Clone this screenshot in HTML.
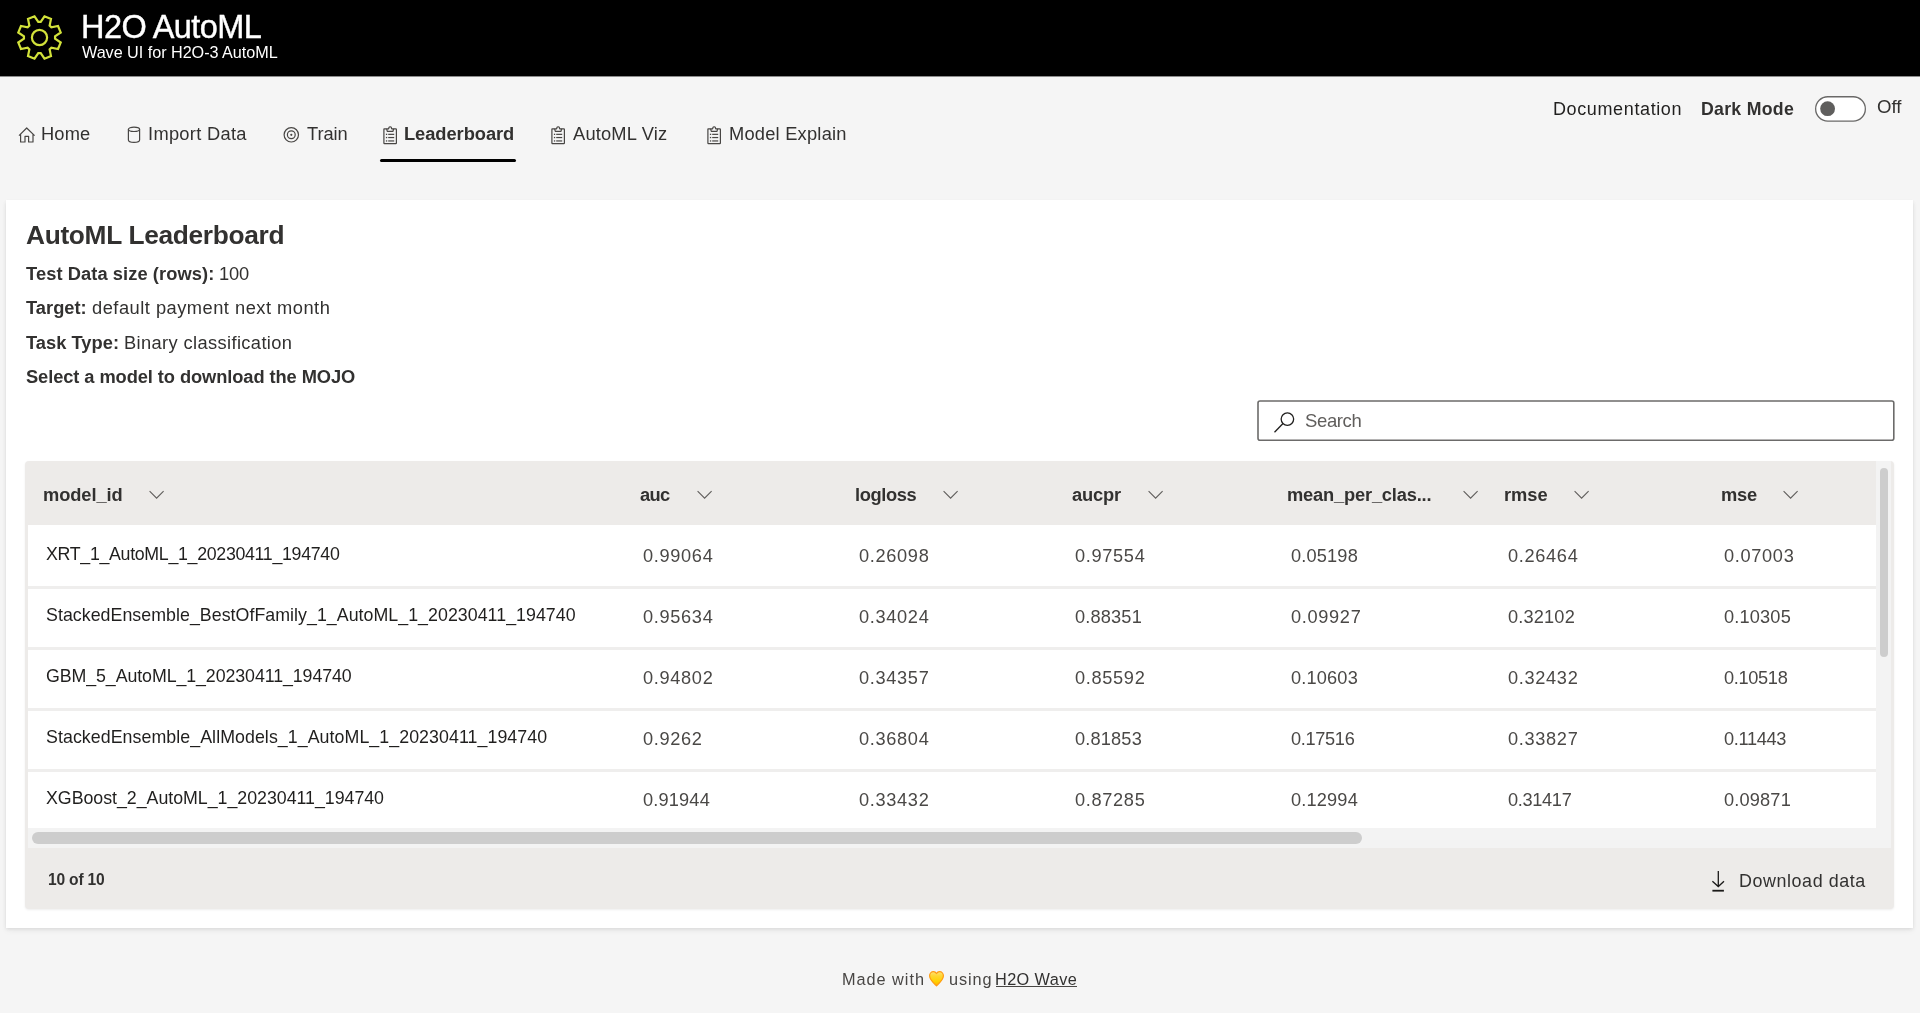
<!DOCTYPE html>
<html><head><meta charset="utf-8"><title>H2O AutoML</title>
<style>
html,body{margin:0;padding:0;}
body{width:1920px;height:1013px;overflow:hidden;position:relative;background:#f5f5f5;font-family:"Liberation Sans",sans-serif;}
.t{position:absolute;white-space:nowrap;line-height:1;will-change:transform;}
.a{position:absolute;}
#hdr{left:0;top:0;width:1920px;height:76px;background:#000;}
#card{left:6px;top:200px;width:1907px;height:728px;background:#fff;box-shadow:0 1.6px 3.6px rgba(0,0,0,.09),0 .3px .9px rgba(0,0,0,.07),0 3px 7px rgba(0,0,0,.035);}
#ul{left:380px;top:159px;width:136px;height:3px;background:#000;border-radius:1.5px;}
#tbl{left:25px;top:461px;width:1869px;height:448px;background:#edebe9;border-radius:4px;box-shadow:0 1px 2.5px rgba(0,0,0,.07);}
#rows{left:28px;top:525px;width:1848px;height:303px;background:#fff;}
.dv{position:absolute;left:28px;width:1848px;height:3px;background:#efeeed;}
#vtrack{left:1876px;top:461px;width:15px;height:387px;background:#f3f3f3;}
#vthumb{left:1880px;top:468px;width:8px;height:189px;background:#cdcdcd;border-radius:4px;}
#htrack{left:28px;top:828px;width:1848px;height:20px;background:#f3f3f3;}
#hthumb{left:32px;top:832px;width:1330px;height:12px;background:#cdcdcd;border-radius:6px;}
#h2ul{left:996px;top:986px;width:81px;height:1px;background:#484644;}
svg{position:absolute;overflow:visible;}
</style></head><body>
<div class="a" id="hdr"></div>
<div class="a" style="left:0;top:76px;width:1920px;height:1px;background:#8c8c8c"></div>
<svg style="left:16px;top:14px" width="48" height="48" viewBox="0 0 48 48">
  <g fill="none" stroke="#d2e23a" stroke-width="2.2" stroke-linejoin="miter">
    <path d="M24.72 7.95 L28.48 2.28 L34.99 4.97 L33.63 11.64 L35.36 13.37 L42.03 12.01 L44.72 18.52 L39.05 22.28 L39.05 24.72 L44.72 28.48 L42.03 34.99 L35.36 33.63 L33.63 35.36 L34.99 42.03 L28.48 44.72 L24.72 39.05 L22.28 39.05 L18.52 44.72 L12.01 42.03 L13.37 35.36 L11.64 33.63 L4.97 34.99 L2.28 28.48 L7.95 24.72 L7.95 22.28 L2.28 18.52 L4.97 12.01 L11.64 13.37 L13.37 11.64 L12.01 4.97 L18.52 2.28 L22.28 7.95 Z"/>
    <circle cx="23.5" cy="23.5" r="7.6"/>
  </g>
</svg>
<div class="a" id="card"></div>
<div class="a" id="ul"></div>
<!-- nav icons -->
<svg style="left:18px;top:127px" width="18" height="17" viewBox="0 0 18 17">
  <path d="M1 8.6 L8.7 1 L16.6 8.6 M2.6 7.2 V15 H7 V9.3 H10.6 V15 H15 V7.2" fill="none" stroke="#484644" stroke-width="1.2" stroke-linejoin="round"/>
</svg>
<svg style="left:127px;top:126px" width="14" height="18" viewBox="0 0 14 18">
  <g fill="none" stroke="#484644" stroke-width="1.2">
    <ellipse cx="7" cy="3.3" rx="5.6" ry="2.2"/>
    <path d="M1.4 3.3 V14 C1.4 15.3 3.9 16.4 7 16.4 C10.1 16.4 12.6 15.3 12.6 14 V3.3"/>
  </g>
</svg>
<svg style="left:283px;top:127px" width="17" height="17" viewBox="0 0 17 17">
  <g fill="none" stroke="#484644" stroke-width="1.2">
    <circle cx="8.3" cy="7.8" r="7.2"/>
    <circle cx="8.3" cy="7.8" r="3.9"/>
  </g>
  <circle cx="8.3" cy="7.8" r="1.1" fill="#484644"/>
</svg>
<svg style="left:383px;top:126px" width="15" height="19" viewBox="0 0 15 19">
  <g fill="none" stroke="#484644" stroke-width="1.2" stroke-linejoin="round">
    <path d="M3.6 2.8 H1.4 C1 2.8 0.9 3 0.9 3.4 V17 C0.9 17.4 1 17.6 1.4 17.6 H12.8 C13.2 17.6 13.4 17.4 13.4 17 V3.4 C13.4 3 13.2 2.8 12.8 2.8 H10.6"/>
    <path d="M3.6 2.8 L4.3 5.4 H10 L10.6 2.8 H8.7 L8.2 1.2 C8 0.6 6.3 0.6 6.1 1.2 L5.6 2.8 Z"/>
  </g>
  <g fill="#484644">
    <rect x="2.9" y="7.7" width="1.3" height="1.3"/><rect x="5.2" y="7.75" width="6" height="1.2"/>
    <rect x="2.9" y="10.9" width="1.3" height="1.3"/><rect x="5.2" y="10.95" width="6" height="1.2"/>
    <rect x="2.9" y="14.3" width="1.3" height="1.3"/><rect x="5.2" y="14.35" width="6" height="1.2"/>
  </g>
</svg>
<svg style="left:551px;top:126px" width="15" height="19" viewBox="0 0 15 19">
  <g fill="none" stroke="#484644" stroke-width="1.2" stroke-linejoin="round">
    <path d="M3.6 2.8 H1.4 C1 2.8 0.9 3 0.9 3.4 V17 C0.9 17.4 1 17.6 1.4 17.6 H12.8 C13.2 17.6 13.4 17.4 13.4 17 V3.4 C13.4 3 13.2 2.8 12.8 2.8 H10.6"/>
    <path d="M3.6 2.8 L4.3 5.4 H10 L10.6 2.8 H8.7 L8.2 1.2 C8 0.6 6.3 0.6 6.1 1.2 L5.6 2.8 Z"/>
  </g>
  <g fill="#484644">
    <rect x="2.9" y="7.7" width="1.3" height="1.3"/><rect x="5.2" y="7.75" width="6" height="1.2"/>
    <rect x="2.9" y="10.9" width="1.3" height="1.3"/><rect x="5.2" y="10.95" width="6" height="1.2"/>
    <rect x="2.9" y="14.3" width="1.3" height="1.3"/><rect x="5.2" y="14.35" width="6" height="1.2"/>
  </g>
</svg>
<svg style="left:707px;top:126px" width="15" height="19" viewBox="0 0 15 19">
  <g fill="none" stroke="#484644" stroke-width="1.2" stroke-linejoin="round">
    <path d="M3.6 2.8 H1.4 C1 2.8 0.9 3 0.9 3.4 V17 C0.9 17.4 1 17.6 1.4 17.6 H12.8 C13.2 17.6 13.4 17.4 13.4 17 V3.4 C13.4 3 13.2 2.8 12.8 2.8 H10.6"/>
    <path d="M3.6 2.8 L4.3 5.4 H10 L10.6 2.8 H8.7 L8.2 1.2 C8 0.6 6.3 0.6 6.1 1.2 L5.6 2.8 Z"/>
  </g>
  <g fill="#484644">
    <rect x="2.9" y="7.7" width="1.3" height="1.3"/><rect x="5.2" y="7.75" width="6" height="1.2"/>
    <rect x="2.9" y="10.9" width="1.3" height="1.3"/><rect x="5.2" y="10.95" width="6" height="1.2"/>
    <rect x="2.9" y="14.3" width="1.3" height="1.3"/><rect x="5.2" y="14.35" width="6" height="1.2"/>
  </g>
</svg>
<svg style="left:1812px;top:93px" width="58" height="32" viewBox="0 0 58 32"><rect x="3.65" y="3.75" width="49.7" height="24.3" rx="12.15" fill="#fff" stroke="#6a6968" stroke-width="1.3"/><circle cx="15.6" cy="15.7" r="7.4" fill="#5f5e5d"/></svg>
<svg style="left:1255px;top:398px" width="642" height="46" viewBox="0 0 642 46"><rect x="3.0" y="3.0" width="635.8" height="39.2" rx="2" fill="#fff" stroke="#6c6b6a" stroke-width="1.6"/></svg>
<svg style="left:1273px;top:411px" width="24" height="24" viewBox="0 0 24 24">
  <g fill="none" stroke="#201f1e" stroke-width="1.3">
    <circle cx="14.4" cy="8.1" r="6.25"/>
    <path d="M10.0 12.5 L1.5 21.2"/>
  </g>
</svg>
<div class="a" id="tbl"></div>
<div class="a" id="rows"></div>
<div class="dv" style="top:586px"></div>
<div class="dv" style="top:647px"></div>
<div class="dv" style="top:708px"></div>
<div class="dv" style="top:769px"></div>
<div class="a" id="vtrack"></div>
<div class="a" id="vthumb"></div>
<div class="a" id="htrack"></div>
<div class="a" id="hthumb"></div>
<svg style="left:148.6px;top:490.3px" width="16" height="10" viewBox="0 0 16 10"><path d="M0.6 1.1 L7.6 8.2 L14.6 1.1" fill="none" stroke="#605e5c" stroke-width="1.1"/></svg>
<svg style="left:697.2px;top:490.3px" width="16" height="10" viewBox="0 0 16 10"><path d="M0.6 1.1 L7.6 8.2 L14.6 1.1" fill="none" stroke="#605e5c" stroke-width="1.1"/></svg>
<svg style="left:943.4px;top:490.3px" width="16" height="10" viewBox="0 0 16 10"><path d="M0.6 1.1 L7.6 8.2 L14.6 1.1" fill="none" stroke="#605e5c" stroke-width="1.1"/></svg>
<svg style="left:1147.7px;top:490.3px" width="16" height="10" viewBox="0 0 16 10"><path d="M0.6 1.1 L7.6 8.2 L14.6 1.1" fill="none" stroke="#605e5c" stroke-width="1.1"/></svg>
<svg style="left:1462.7px;top:490.3px" width="16" height="10" viewBox="0 0 16 10"><path d="M0.6 1.1 L7.6 8.2 L14.6 1.1" fill="none" stroke="#605e5c" stroke-width="1.1"/></svg>
<svg style="left:1574.4px;top:490.3px" width="16" height="10" viewBox="0 0 16 10"><path d="M0.6 1.1 L7.6 8.2 L14.6 1.1" fill="none" stroke="#605e5c" stroke-width="1.1"/></svg>
<svg style="left:1783.3px;top:490.3px" width="16" height="10" viewBox="0 0 16 10"><path d="M0.6 1.1 L7.6 8.2 L14.6 1.1" fill="none" stroke="#605e5c" stroke-width="1.1"/></svg>
<svg style="left:1711px;top:870px" width="14" height="23" viewBox="0 0 14 23">
  <g fill="none" stroke="#1b1a19" stroke-width="1.3">
    <path d="M7.3 1 V16.4 M1.4 11.3 L7.3 16.6 L13 11.3"/>
  </g>
  <rect x="1.4" y="19.8" width="11.5" height="1.8" fill="#1b1a19"/>
</svg>
<div class="t" style="left:928px;top:970px;font-size:16px;line-height:1;">
<svg style="left:0;top:0" width="17" height="17" viewBox="0 0 17 17"><defs><linearGradient id="hg" x1="0" y1="0" x2="0" y2="1"><stop offset="0" stop-color="#ffe27a"/><stop offset="0.3" stop-color="#ffd633"/><stop offset="0.7" stop-color="#ffd000"/><stop offset="1" stop-color="#ffb000"/></linearGradient></defs><path d="M8.5 15.9 C6.1 13.4 1.6 9.9 1.6 5.8 C1.6 3.4 3.4 1.6 5.4 1.6 C6.8 1.6 7.9 2.4 8.5 3.5 C9.1 2.4 10.2 1.6 11.6 1.6 C13.6 1.6 15.4 3.4 15.4 5.8 C15.4 9.9 10.9 13.4 8.5 15.9 Z" fill="url(#hg)" stroke="#ff9b12" stroke-width="1.2" stroke-linejoin="round"/></svg>
</div>
<div class="a" id="h2ul"></div>
<div class="t" id="h1" style="left:81.30px;top:10.71px;font-size:32.5px;font-weight:400;color:#ffffff;letter-spacing:-0.576px;-webkit-text-stroke:0.4px #fff;">H2O AutoML</div>
<div class="t" id="h2" style="left:81.60px;top:43.90px;font-size:16.2px;font-weight:400;color:#ffffff;letter-spacing:-0.031px;">Wave UI for H2O-3 AutoML</div>
<div class="t" id="n1" style="left:40.90px;top:125.22px;font-size:18.3px;font-weight:400;color:#323130;letter-spacing:0.167px;">Home</div>
<div class="t" id="n2" style="left:147.70px;top:125.22px;font-size:18.3px;font-weight:400;color:#323130;letter-spacing:0.296px;">Import Data</div>
<div class="t" id="n3" style="left:307.00px;top:125.22px;font-size:18.3px;font-weight:400;color:#323130;letter-spacing:-0.051px;">Train</div>
<div class="t" id="n4" style="left:404.40px;top:125.22px;font-size:18.3px;font-weight:700;color:#323130;letter-spacing:-0.046px;">Leaderboard</div>
<div class="t" id="n5" style="left:573.30px;top:125.22px;font-size:18.3px;font-weight:400;color:#323130;letter-spacing:0.188px;">AutoML Viz</div>
<div class="t" id="n6" style="left:728.70px;top:125.22px;font-size:18.3px;font-weight:400;color:#323130;letter-spacing:0.220px;">Model Explain</div>
<div class="t" id="d1" style="left:1552.50px;top:100.22px;font-size:18px;font-weight:400;color:#201f1e;letter-spacing:0.620px;">Documentation</div>
<div class="t" id="d2" style="left:1701.30px;top:100.60px;font-size:17.7px;font-weight:700;color:#323130;letter-spacing:0.289px;">Dark Mode</div>
<div class="t" id="d3" style="left:1876.80px;top:98.31px;font-size:18.6px;font-weight:400;color:#323130;letter-spacing:-0.046px;">Off</div>
<div class="t" id="c1" style="left:26.10px;top:221.90px;font-size:26.3px;font-weight:700;color:#323130;letter-spacing:-0.322px;">AutoML Leaderboard</div>
<div class="t" id="l1" style="left:26.10px;top:264.72px;font-size:18.3px;font-weight:700;color:#323130;letter-spacing:0.081px;">Test Data size (rows):</div>
<div class="t" id="l1b" style="left:219.20px;top:264.72px;font-size:18.3px;font-weight:400;color:#323130;letter-spacing:-0.167px;">100</div>
<div class="t" id="l2" style="left:26.40px;top:299.01px;font-size:18.3px;font-weight:700;color:#323130;letter-spacing:0.015px;">Target:</div>
<div class="t" id="l2b" style="left:92.30px;top:299.01px;font-size:18.3px;font-weight:400;color:#323130;letter-spacing:0.490px;">default payment next month</div>
<div class="t" id="l3" style="left:26.40px;top:333.72px;font-size:18.3px;font-weight:700;color:#323130;letter-spacing:0.022px;">Task Type:</div>
<div class="t" id="l3b" style="left:124.40px;top:333.72px;font-size:18.3px;font-weight:400;color:#323130;letter-spacing:0.372px;">Binary classification</div>
<div class="t" id="l4" style="left:26.40px;top:367.60px;font-size:18.3px;font-weight:700;color:#323130;letter-spacing:-0.086px;">Select a model to download the MOJO</div>
<div class="t" id="s1" style="left:1304.90px;top:412.01px;font-size:18.5px;font-weight:400;color:#605e5c;letter-spacing:-0.366px;">Search</div>
<div class="t" id="th0" style="left:42.75px;top:485.80px;font-size:18.3px;font-weight:700;color:#323130;letter-spacing:-0.083px;">model_id</div>
<div class="t" id="th1" style="left:639.70px;top:485.80px;font-size:18.3px;font-weight:700;color:#323130;letter-spacing:-0.667px;">auc</div>
<div class="t" id="th2" style="left:854.90px;top:485.80px;font-size:18.3px;font-weight:700;color:#323130;letter-spacing:-0.404px;">logloss</div>
<div class="t" id="th3" style="left:1072.00px;top:485.80px;font-size:18.3px;font-weight:700;color:#323130;letter-spacing:-0.192px;">aucpr</div>
<div class="t" id="th4" style="left:1287.30px;top:485.80px;font-size:18.3px;font-weight:700;color:#323130;letter-spacing:-0.185px;">mean_per_clas...</div>
<div class="t" id="th5" style="left:1504.00px;top:485.80px;font-size:18.3px;font-weight:700;color:#323130;letter-spacing:-0.012px;">rmse</div>
<div class="t" id="th6" style="left:1720.60px;top:485.80px;font-size:18.3px;font-weight:700;color:#323130;letter-spacing:-0.211px;">mse</div>
<div class="t" id="r0" style="left:46.00px;top:546.01px;font-size:17.8px;font-weight:400;color:#201f1e;letter-spacing:-0.313px;">XRT_1_AutoML_1_20230411_194740</div>
<div class="t" id="r0c0" style="left:642.50px;top:546.81px;font-size:18.2px;font-weight:400;color:#4a4846;letter-spacing:0.667px;">0.99064</div>
<div class="t" id="r0c1" style="left:858.70px;top:546.81px;font-size:18.2px;font-weight:400;color:#4a4846;letter-spacing:0.667px;">0.26098</div>
<div class="t" id="r0c2" style="left:1074.90px;top:546.81px;font-size:18.2px;font-weight:400;color:#4a4846;letter-spacing:0.667px;">0.97554</div>
<div class="t" id="r0c3" style="left:1291.30px;top:546.81px;font-size:18.2px;font-weight:400;color:#4a4846;letter-spacing:0.167px;">0.05198</div>
<div class="t" id="r0c4" style="left:1507.50px;top:546.81px;font-size:18.2px;font-weight:400;color:#4a4846;letter-spacing:0.667px;">0.26464</div>
<div class="t" id="r0c5" style="left:1723.90px;top:546.81px;font-size:18.2px;font-weight:400;color:#4a4846;letter-spacing:0.667px;">0.07003</div>
<div class="t" id="r1" style="left:46.00px;top:607.01px;font-size:17.8px;font-weight:400;color:#201f1e;letter-spacing:0.038px;">StackedEnsemble_BestOfFamily_1_AutoML_1_20230411_194740</div>
<div class="t" id="r1c0" style="left:642.50px;top:607.81px;font-size:18.2px;font-weight:400;color:#4a4846;letter-spacing:0.667px;">0.95634</div>
<div class="t" id="r1c1" style="left:858.70px;top:607.81px;font-size:18.2px;font-weight:400;color:#4a4846;letter-spacing:0.667px;">0.34024</div>
<div class="t" id="r1c2" style="left:1074.90px;top:607.81px;font-size:18.2px;font-weight:400;color:#4a4846;letter-spacing:0.167px;">0.88351</div>
<div class="t" id="r1c3" style="left:1291.30px;top:607.81px;font-size:18.2px;font-weight:400;color:#4a4846;letter-spacing:0.667px;">0.09927</div>
<div class="t" id="r1c4" style="left:1507.50px;top:607.81px;font-size:18.2px;font-weight:400;color:#4a4846;letter-spacing:0.167px;">0.32102</div>
<div class="t" id="r1c5" style="left:1723.90px;top:607.81px;font-size:18.2px;font-weight:400;color:#4a4846;letter-spacing:0.167px;">0.10305</div>
<div class="t" id="r2" style="left:46.00px;top:668.01px;font-size:17.8px;font-weight:400;color:#201f1e;letter-spacing:-0.084px;">GBM_5_AutoML_1_20230411_194740</div>
<div class="t" id="r2c0" style="left:642.50px;top:668.81px;font-size:18.2px;font-weight:400;color:#4a4846;letter-spacing:0.667px;">0.94802</div>
<div class="t" id="r2c1" style="left:858.70px;top:668.81px;font-size:18.2px;font-weight:400;color:#4a4846;letter-spacing:0.667px;">0.34357</div>
<div class="t" id="r2c2" style="left:1074.90px;top:668.81px;font-size:18.2px;font-weight:400;color:#4a4846;letter-spacing:0.667px;">0.85592</div>
<div class="t" id="r2c3" style="left:1291.30px;top:668.81px;font-size:18.2px;font-weight:400;color:#4a4846;letter-spacing:0.167px;">0.10603</div>
<div class="t" id="r2c4" style="left:1507.50px;top:668.81px;font-size:18.2px;font-weight:400;color:#4a4846;letter-spacing:0.667px;">0.32432</div>
<div class="t" id="r2c5" style="left:1723.90px;top:668.81px;font-size:18.2px;font-weight:400;color:#4a4846;letter-spacing:-0.333px;">0.10518</div>
<div class="t" id="r3" style="left:46.00px;top:729.01px;font-size:17.8px;font-weight:400;color:#201f1e;letter-spacing:0.062px;">StackedEnsemble_AllModels_1_AutoML_1_20230411_194740</div>
<div class="t" id="r3c0" style="left:642.50px;top:729.81px;font-size:18.2px;font-weight:400;color:#4a4846;letter-spacing:0.667px;">0.9262</div>
<div class="t" id="r3c1" style="left:858.70px;top:729.81px;font-size:18.2px;font-weight:400;color:#4a4846;letter-spacing:0.667px;">0.36804</div>
<div class="t" id="r3c2" style="left:1074.90px;top:729.81px;font-size:18.2px;font-weight:400;color:#4a4846;letter-spacing:0.167px;">0.81853</div>
<div class="t" id="r3c3" style="left:1291.30px;top:729.81px;font-size:18.2px;font-weight:400;color:#4a4846;letter-spacing:-0.333px;">0.17516</div>
<div class="t" id="r3c4" style="left:1507.50px;top:729.81px;font-size:18.2px;font-weight:400;color:#4a4846;letter-spacing:0.667px;">0.33827</div>
<div class="t" id="r3c5" style="left:1723.90px;top:729.81px;font-size:18.2px;font-weight:400;color:#4a4846;letter-spacing:-0.333px;">0.11443</div>
<div class="t" id="r4" style="left:46.00px;top:790.01px;font-size:17.8px;font-weight:400;color:#201f1e;letter-spacing:-0.024px;">XGBoost_2_AutoML_1_20230411_194740</div>
<div class="t" id="r4c0" style="left:642.50px;top:790.81px;font-size:18.2px;font-weight:400;color:#4a4846;letter-spacing:0.167px;">0.91944</div>
<div class="t" id="r4c1" style="left:858.70px;top:790.81px;font-size:18.2px;font-weight:400;color:#4a4846;letter-spacing:0.667px;">0.33432</div>
<div class="t" id="r4c2" style="left:1074.90px;top:790.81px;font-size:18.2px;font-weight:400;color:#4a4846;letter-spacing:0.667px;">0.87285</div>
<div class="t" id="r4c3" style="left:1291.30px;top:790.81px;font-size:18.2px;font-weight:400;color:#4a4846;letter-spacing:0.167px;">0.12994</div>
<div class="t" id="r4c4" style="left:1507.50px;top:790.81px;font-size:18.2px;font-weight:400;color:#4a4846;letter-spacing:-0.333px;">0.31417</div>
<div class="t" id="r4c5" style="left:1723.90px;top:790.81px;font-size:18.2px;font-weight:400;color:#4a4846;letter-spacing:0.167px;">0.09871</div>
<div class="t" id="f1" style="left:47.70px;top:872.01px;font-size:15.6px;font-weight:700;color:#323130;letter-spacing:-0.200px;">10 of 10</div>
<div class="t" id="f2" style="left:1739.00px;top:872.51px;font-size:17.9px;font-weight:400;color:#323130;letter-spacing:0.575px;">Download data</div>
<div class="t" id="p1" style="left:842.00px;top:970.71px;font-size:16.3px;font-weight:400;color:#484644;letter-spacing:0.969px;">Made with</div>
<div class="t" id="p2" style="left:949.20px;top:970.71px;font-size:16.3px;font-weight:400;color:#484644;letter-spacing:0.883px;">using</div>
<div class="t" id="p3" style="left:995.20px;top:970.71px;font-size:16.3px;font-weight:400;color:#323130;letter-spacing:0.406px;">H2O Wave</div>
</body></html>
